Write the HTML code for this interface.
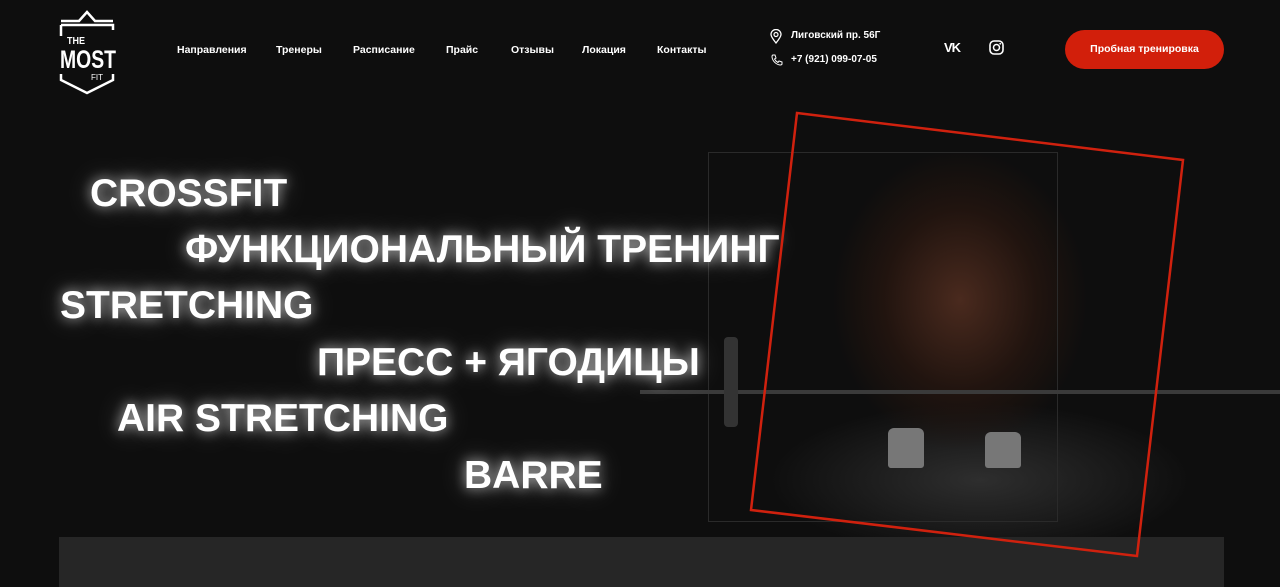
<!DOCTYPE html>
<html><head><meta charset="utf-8"><style>
*{margin:0;padding:0;box-sizing:border-box}
body{width:1280px;height:581px;background:#0e0e0e;overflow:hidden;position:relative;font-family:"Liberation Sans",sans-serif;color:#fff}
.nav a{position:absolute;top:44px;font-size:10.5px;font-weight:bold;color:#fff;text-decoration:none}
.h{position:absolute;font-size:39px;font-weight:bold;color:#fff;text-shadow:0 0 12px rgba(255,255,255,.7),0 0 28px rgba(255,255,255,.35);white-space:nowrap;line-height:1}
.sm{position:absolute;font-size:10px;font-weight:bold;color:#fff}
</style></head><body>
<!-- logo -->
<svg style="position:absolute;left:55px;top:8px" width="66" height="90" viewBox="0 0 66 90">
<path d="M6 13 L24 13 L32 4 L40 13 L58 13" stroke="#fff" stroke-width="2.5" fill="none"/>
<path d="M6 17 H58 V22 M6 17 V28" stroke="#fff" stroke-width="2.5" fill="none"/>
<path d="M6 66 V72 L32 85 L58 72 V66" stroke="#fff" stroke-width="2.5" fill="none"/>
<text x="12" y="36" font-size="10" fill="#fff" font-family="Liberation Sans" font-weight="bold" textLength="18" lengthAdjust="spacingAndGlyphs">THE</text>
<text x="5" y="60" font-size="25" fill="#fff" font-family="Liberation Sans" font-weight="bold" textLength="56" lengthAdjust="spacingAndGlyphs">MOST</text>
<text x="36" y="72" font-size="8" fill="#fff" font-family="Liberation Sans">FIT</text>
</svg>
<div class="nav">
<a style="left:177px">Направления</a><a style="left:276px">Тренеры</a><a style="left:353px">Расписание</a><a style="left:446px">Прайс</a><a style="left:511px">Отзывы</a><a style="left:582px">Локация</a><a style="left:657px">Контакты</a>
</div>
<svg style="position:absolute;left:770px;top:29px" width="12" height="15" viewBox="0 0 12 15"><path d="M6 14 C2 9 1 7 1 5.5 A5 5 0 0 1 11 5.5 C11 7 10 9 6 14Z" stroke="#fff" stroke-width="1.3" fill="none"/><circle cx="6" cy="5.5" r="2" stroke="#fff" stroke-width="1.2" fill="none"/></svg>
<div class="sm" style="left:791px;top:30px">Лиговский пр. 56Г</div>
<svg style="position:absolute;left:771px;top:54px" width="12" height="12" viewBox="0 0 12 12"><path d="M2 1 L4 1 L5 4 L3.5 5 C4.5 7 5 7.5 7 8.5 L8 7 L11 8 L11 10 C11 11 10 11 9 11 C5 10.5 1.5 7 1 3 C1 2 1 1 2 1Z" stroke="#fff" stroke-width="1" fill="none"/></svg>
<div class="sm" style="left:791px;top:54px">+7 (921) 099-07-05</div>
<div style="position:absolute;left:944px;top:40px;font-size:13px;font-weight:bold;letter-spacing:-1px">VK</div>
<svg style="position:absolute;left:989px;top:40px" width="15" height="15" viewBox="0 0 15 15"><rect x="1" y="1" width="13" height="13" rx="4" stroke="#fff" stroke-width="1.6" fill="none"/><circle cx="7.5" cy="7.5" r="3" stroke="#fff" stroke-width="1.5" fill="none"/><circle cx="11.2" cy="3.8" r=".9" fill="#fff"/></svg>
<div style="position:absolute;left:1065px;top:30px;width:159px;height:39px;border-radius:20px;background:#d21f0b;font-size:10.5px;font-weight:bold;text-align:center;line-height:39px">Пробная тренировка</div>
<!-- photo -->
<div style="position:absolute;left:620px;top:140px;width:660px;height:400px;background:radial-gradient(ellipse 170px 200px at 340px 160px,#4a2a1e 0%,#21140f 45%,rgba(14,14,14,0) 75%),radial-gradient(ellipse 300px 110px at 360px 340px,#2e2e2e 0%,rgba(14,14,14,0) 70%)"></div>
<div style="position:absolute;left:708px;top:152px;width:350px;height:370px;border:1px solid #2a2a2a"></div>
<div style="position:absolute;left:640px;top:390px;width:640px;height:4px;background:#3a3a3a"></div>
<div style="position:absolute;left:888px;top:428px;width:36px;height:40px;background:#777;border-radius:6px 6px 3px 3px"></div>
<div style="position:absolute;left:985px;top:432px;width:36px;height:36px;background:#777;border-radius:6px 6px 3px 3px"></div>
<div style="position:absolute;left:724px;top:337px;width:14px;height:90px;background:#333;border-radius:4px"></div>
<div class="h" style="left:90px;top:174px">CROSSFIT</div>
<div class="h" style="left:185px;top:230px">ФУНКЦИОНАЛЬНЫЙ ТРЕНИНГ</div>
<div class="h" style="left:60px;top:286px">STRETCHING</div>
<div class="h" style="left:317px;top:343px">ПРЕСС + ЯГОДИЦЫ</div>
<div class="h" style="left:117px;top:399px">AIR STRETCHING</div>
<div class="h" style="left:464px;top:456px">BARRE</div>
<div style="position:absolute;left:59px;top:537px;width:1165px;height:50px;background:#262626"></div>
<svg style="position:absolute;left:0;top:0" width="1280" height="581"><polygon points="797,113 1183,160 1137,556 751,510" stroke="#d0210e" stroke-width="2.5" fill="none"/></svg>
</body></html>
